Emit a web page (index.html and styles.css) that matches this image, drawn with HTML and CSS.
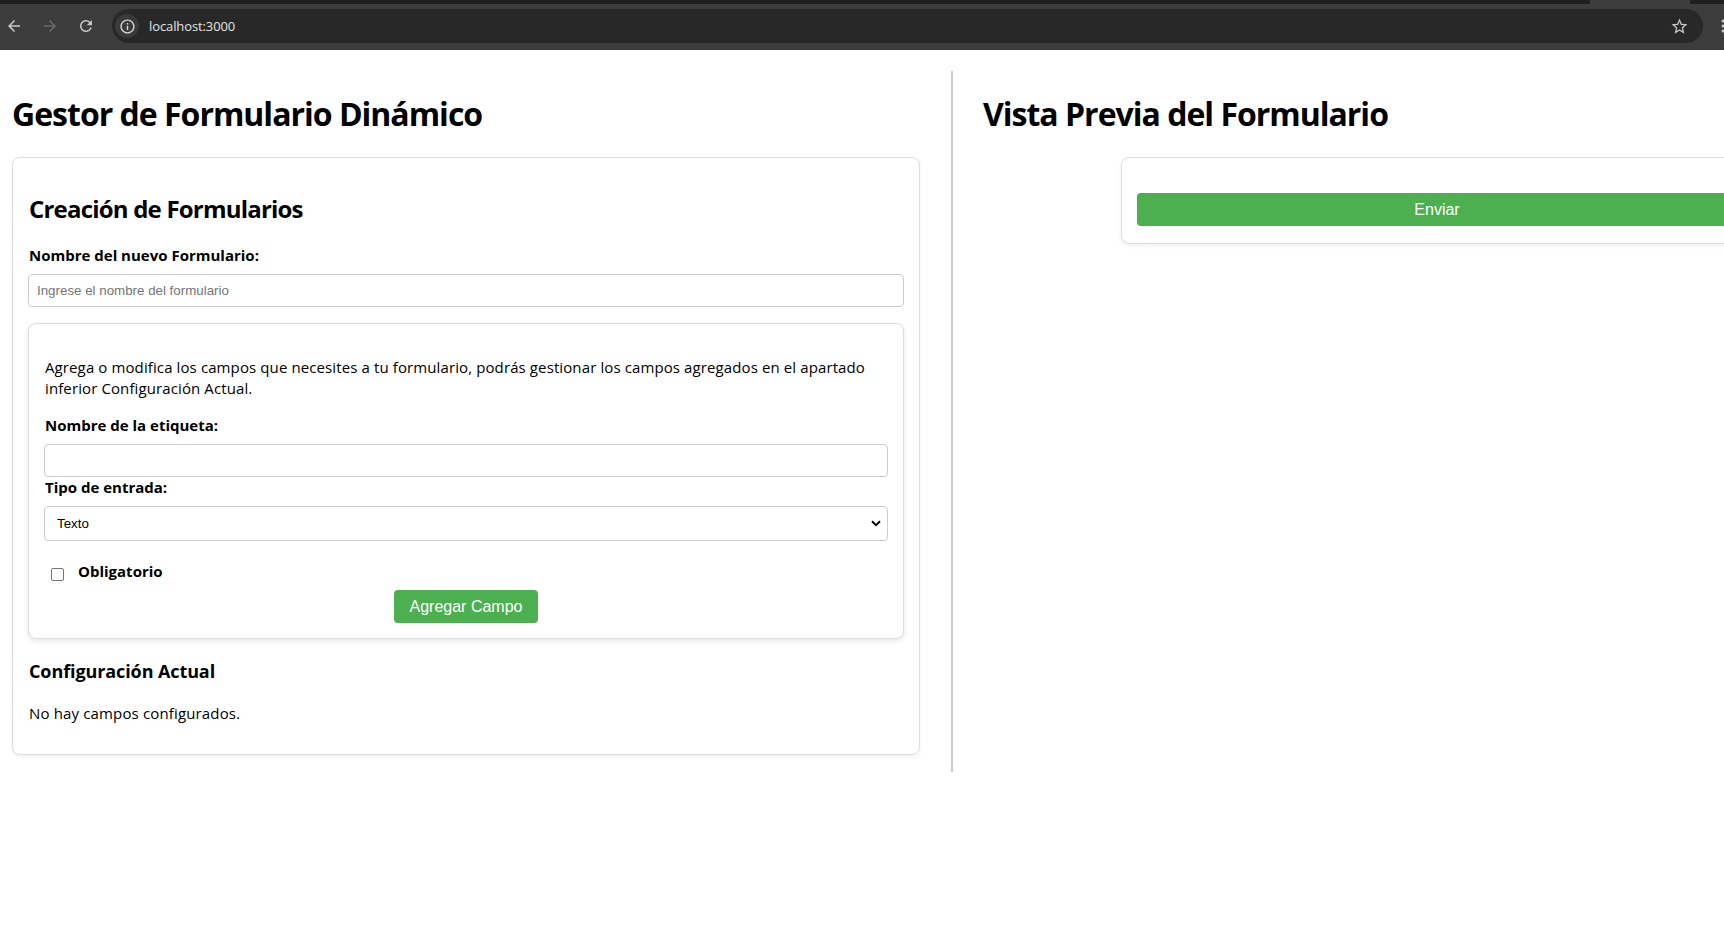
FILE: index.html
```html
<!DOCTYPE html>
<html lang="es">
<head>
<meta charset="utf-8">
<title>Gestor de Formulario Dinámico</title>
<link rel="stylesheet" href="styles.css">
</head>
<body>
<header class="browser">
  <div class="tabstrip"><span class="tab-bottom"></span></div>
  <div class="toolbar">
    <div class="nav">
      <span class="nav-btn">
        <svg viewBox="0 0 24 24" class="icon"><path d="M20 11H7.83l5.59-5.59L12 4l-8 8 8 8 1.41-1.41L7.83 13H20v-2z"/></svg>
      </span>
      <span class="nav-btn disabled">
        <svg viewBox="0 0 24 24" class="icon"><path d="M4 11h12.17l-5.59-5.59L12 4l8 8-8 8-1.41-1.41L16.17 13H4v-2z"/></svg>
      </span>
      <span class="nav-btn">
        <svg viewBox="0 0 24 24" class="icon"><path d="M17.65 6.35A7.958 7.958 0 0 0 12 4c-4.42 0-7.99 3.58-7.99 8s3.57 8 7.99 8c3.73 0 6.84-2.55 7.73-6h-2.08A5.99 5.99 0 0 1 12 18c-3.31 0-6-2.69-6-6s2.69-6 6-6c1.66 0 3.14.69 4.22 1.78L13 11h7V4l-2.35 2.35z"/></svg>
      </span>
    </div>
    <div class="omnibox">
      <span class="chip">
        <svg viewBox="0 0 24 24" class="icon info"><path d="M11 7h2v2h-2zm0 4h2v6h-2zm1-9C6.480 2 2 6.48 2 12s4.48 10 10 10 10-4.48 10-10S17.52 2 12 2zm0 18c-4.41 0-8-3.59-8-8s3.59-8 8-8 8 3.59 8 8-3.59 8-8 8z"/></svg>
      </span>
      <span class="url">localhost:3000</span>
      <svg viewBox="0 0 24 24" class="icon star"><path d="M22 9.24l-7.19-.62L12 2 9.19 8.63 2 9.24l5.46 4.73L5.82 21 12 17.27 18.18 21l-1.63-7.03L22 9.24zM12 15.4l-3.76 2.27 1-4.28-3.32-2.88 4.38-.38L12 6.1l1.71 4.04 4.38.38-3.32 2.88 1 4.28L12 15.4z"/></svg>
    </div>
    <span class="menu">
      <svg viewBox="0 0 4 16" class="kebab"><circle cx="2" cy="3" r="1.5"/><circle cx="2" cy="8" r="1.5"/><circle cx="2" cy="13" r="1.5"/></svg>
    </span>
  </div>
</header>

<main class="viewport">
  <div class="layout">
    <section class="panel panel-editor">
      <h1 class="panel-title">Gestor de Formulario Dinámico</h1>
      <div class="card">
        <h2 class="card-title">Creación de Formularios</h2>
        <label class="field-label" for="form-name">Nombre del nuevo Formulario:</label>
        <input class="text-input" id="form-name" type="text" placeholder="Ingrese el nombre del formulario">

        <div class="card card-inner">
          <p class="intro">Agrega o modifica los campos que necesites a tu formulario, podrás gestionar los campos agregados en el apartado inferior Configuración Actual.</p>
          <label class="field-label" for="label-name">Nombre de la etiqueta:</label>
          <input class="text-input" id="label-name" type="text">
          <label class="field-label" for="input-type">Tipo de entrada:</label>
          <div class="select-wrap">
            <select class="select-input" id="input-type">
              <option>Texto</option>
            </select>
            <svg viewBox="0 0 10 7" class="chevron"><path d="M1 1.2l4 4 4-4" fill="none" stroke="#000" stroke-width="2"/></svg>
          </div>
          <div class="check-row">
            <span class="checkbox"></span>
            <span class="check-label">Obligatorio</span>
          </div>
          <div class="actions">
            <button class="btn" type="button">Agregar Campo</button>
          </div>
        </div>

        <h3 class="section-title">Configuración Actual</h3>
        <p class="empty">No hay campos configurados.</p>
      </div>
    </section>

    <section class="panel panel-preview">
      <h1 class="panel-title">Vista Previa del Formulario</h1>
      <div class="card preview-card">
        <button class="btn btn-block" type="button">Enviar</button>
      </div>
    </section>
  </div>
</main>
</body>
</html>
```

FILE: styles.css
```css
html, body {
  margin: 0;
  padding: 0;
  background: #ffffff;
  overflow: hidden;
}

body {
  width: 1724px;
  height: 943px;
  font-family: "Open Sans", "Noto Sans", sans-serif;
  color: #000;
}

/* ---------- browser chrome ---------- */
.browser {
  height: 50px;
  background: #3c3c3c;
  display: flex;
  flex-direction: column;
}

.tabstrip {
  height: 4px;
  background: #1f1f1f;
  position: relative;
}

.tab-bottom {
  position: absolute;
  left: 1590px;
  width: 100px;
  top: 0;
  height: 4px;
  background: #3c3c3c;
}

.toolbar {
  flex: 1;
  display: flex;
  align-items: center;
  padding-bottom: 2px;
}

.nav {
  display: flex;
  gap: 8px;
}

.nav-btn {
  width: 28px;
  height: 28px;
  display: flex;
  align-items: center;
  justify-content: center;
}

.icon {
  width: 18px;
  height: 18px;
  fill: #c7c7c7;
}

.nav-btn.disabled .icon {
  fill: #6a6a6a;
}

.omnibox {
  flex: 1;
  margin-left: 12px;
  height: 34px;
  border-radius: 17px;
  background: #282828;
  display: flex;
  align-items: center;
  padding: 0 14px 0 3px;
}

.chip {
  width: 24px;
  height: 24px;
  border-radius: 50%;
  background: #3a3a3a;
  display: flex;
  align-items: center;
  justify-content: center;
}

.icon.info {
  width: 17px;
  height: 17px;
  fill: #d6d6d6;
}

.url {
  margin-left: 10px;
  flex: 1;
  font-size: 13px;
  color: #e3e3e3;
  letter-spacing: -0.1px;
}

.icon.star {
  width: 19px;
  height: 19px;
  fill: #c7c7c7;
}

.menu {
  width: 21px;
  display: flex;
  justify-content: flex-end;
}

.kebab {
  width: 4px;
  height: 16px;
  fill: #c7c7c7;
  margin-right: -1px;
}

/* ---------- page ---------- */
.viewport {
  height: 893px;
  overflow: hidden;
}

.layout {
  display: flex;
  align-items: flex-start;
  width: max-content;
  padding-top: 21px;
}

.panel {
  width: 908px;
}

.panel-editor {
  padding: 0 31px 17px 12px;
  border-right: 2px solid #cccccc;
}

.panel-preview {
  padding: 0 0 0 30px;
}

.panel-title {
  font-size: 32px;
  line-height: 42px;
  font-weight: 700;
  margin: 22px 0 22px;
  letter-spacing: -1px;
}

.card {
  border: 1px solid #dddddd;
  border-radius: 8px;
  padding: 15px;
  background: #fff;
  box-shadow: 0 2px 4px rgba(0, 0, 0, 0.06);
}

.card-title {
  font-size: 24px;
  line-height: 32px;
  font-weight: 700;
  margin: 20px 0;
  padding-left: 1px;
  letter-spacing: -0.8px;
}

.field-label {
  display: block;
  font-size: 15px;
  line-height: 21px;
  font-weight: 700;
  margin-bottom: 8px;
  padding-left: 1px;
}

.text-input,
.select-input {
  display: block;
  width: 100%;
  box-sizing: border-box;
  height: 33px;
  padding: 0 8px;
  border: 1px solid #cccccc;
  border-radius: 4px;
  font-family: "Liberation Sans", Arial, sans-serif;
  font-size: 13.33px;
  color: #000;
  background: #fff;
}

.text-input::placeholder {
  color: #757575;
}

.card-inner {
  margin-top: 16px;
  box-shadow: 0 2px 5px rgba(0, 0, 0, 0.1);
}

.intro {
  font-size: 15px;
  line-height: 21px;
  margin: 18px 0 16px;
  padding-left: 1px;
  letter-spacing: 0.11px;
}

.select-wrap {
  position: relative;
}

.select-input {
  height: 35px;
  padding: 0 12px;
  appearance: none;
  -webkit-appearance: none;
}

.chevron {
  position: absolute;
  right: 7px;
  top: 14px;
  width: 10px;
  height: 7px;
}

.check-row {
  display: flex;
  align-items: center;
  margin-top: 20px;
  height: 21px;
}

.checkbox {
  width: 11px;
  height: 11px;
  border: 1px solid #767676;
  border-radius: 2px;
  margin: 6px 0 0 7px;
  background: #fff;
}

.check-label {
  margin-left: 14px;
  font-size: 15px;
  font-weight: 700;
  line-height: 21px;
}

.actions {
  display: flex;
  justify-content: center;
  margin-top: 8px;
}

.btn {
  height: 33px;
  padding: 0 16px;
  border: none;
  border-radius: 4px;
  background: #4caf50;
  color: #fff;
  font-family: "Liberation Sans", Arial, sans-serif;
  font-size: 16px;
}

.section-title {
  font-size: 18px;
  line-height: 26px;
  font-weight: 700;
  margin: 19px 0 19px;
  padding-left: 1px;
  letter-spacing: -0.1px;
}

.empty {
  font-size: 15px;
  line-height: 21px;
  margin: 0 0 15px;
  padding-left: 1px;
  letter-spacing: 0.15px;
}

.preview-card {
  width: 600px;
  margin: 0 auto;
  padding-bottom: 17px;
}

.btn-block {
  display: block;
  width: 100%;
  margin-top: 20px;
}
```
